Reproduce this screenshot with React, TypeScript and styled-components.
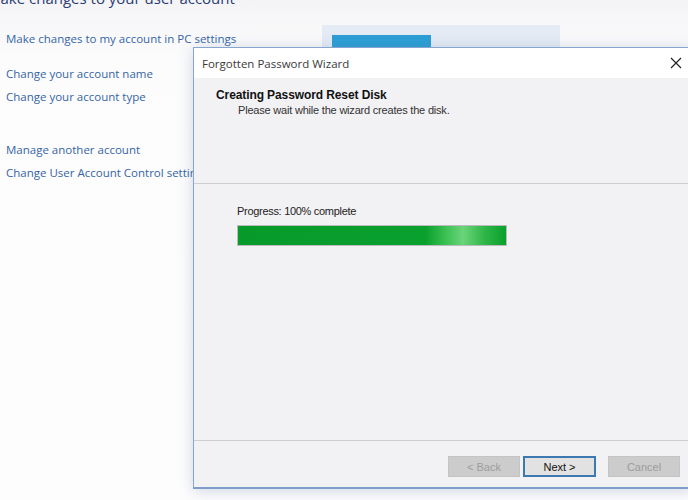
import styled, { createGlobalStyle } from 'styled-components';

const Global = createGlobalStyle`
  html, body {
    margin: 0;
    padding: 0;
    background: #fbfbfc;
  }
`;

const Desktop = styled.div`
  position: relative;
  width: 688px;
  height: 500px;
  overflow: hidden;
  background: linear-gradient(#f4f4f6, #fcfcfd 60px, #fdfdfe);
  font-family: 'Open Sans', 'Noto Sans', sans-serif;
`;

const Page = styled.div`
  display: flex;
  flex-direction: column;
  padding: 0 0 0 6px;
`;

const Heading = styled.h1`
  margin: -12px 0 0 -19px;
  font-size: 15px;
  font-weight: 400;
  color: #2a3c74;
  line-height: 20px;
  white-space: nowrap;
`;

const TopRow = styled.div`
  display: flex;
  align-items: flex-start;
  margin-top: 22px;
`;

const Tile = styled.div`
  margin: -5px 0 0 86px;
  width: 238px;
  height: 22px;
  background: #e4ebf5;
  display: flex;
  align-items: flex-end;
  padding-left: 10px;
  box-sizing: border-box;
`;

const TileBar = styled.div`
  width: 99px;
  height: 12px;
  background: #2c9fd5;
`;

const LinkGroup = styled.div<{ $gap: number }>`
  display: flex;
  flex-direction: column;
  gap: 5px;
  margin-top: ${(p) => p.$gap}px;
`;

const PageLink = styled.a`
  font-size: 11.5px;
  line-height: 18px;
  color: #3565a4;
  text-decoration: none;
  white-space: nowrap;
`;

const Window = styled.div`
  position: absolute;
  left: 193px;
  top: 47px;
  width: 500px;
  height: 442px;
  box-sizing: border-box;
  border: 1px solid #86a5cf;
  border-bottom: 2px solid #7d9ecb;
  background: #f2f1f4;
  box-shadow: 0 2px 14px rgba(90, 110, 150, 0.28);
  display: flex;
  flex-direction: column;
  font-family: 'Liberation Sans', Arial, sans-serif;
`;

const TitleBar = styled.div`
  height: 30px;
  background: #ffffff;
  display: flex;
  align-items: center;
  justify-content: space-between;
  padding: 0 9px 0 8px;
  font-family: 'Open Sans', 'Noto Sans', sans-serif;
  font-size: 11.5px;
  color: #3a3a3a;
`;

const Close = styled.span`
  display: flex;
  width: 14px;
  height: 14px;
`;

const Header = styled.div`
  height: 106px;
  box-sizing: border-box;
  padding: 11px 0 0 22px;
  border-bottom: 1px solid #cfcfd2;
`;

const HeaderTitle = styled.div`
  font-size: 12px;
  font-weight: 700;
  color: #111;
  line-height: 13px;
  letter-spacing: -0.1px;
`;

const HeaderSub = styled.div`
  font-size: 11px;
  color: #333;
  line-height: 13px;
  margin: 2px 0 0 22px;
  letter-spacing: -0.2px;
`;

const Body = styled.div`
  flex: 1;
  padding: 21px 0 0 43px;
  border-bottom: 1px solid #cfcfd2;
`;

const Label = styled.div`
  font-size: 11px;
  color: #222;
  line-height: 13px;
  letter-spacing: -0.3px;
`;

const Bar = styled.div`
  margin-top: 7px;
  width: 270px;
  height: 21px;
  background: #e6e6e6;
  border: 1px solid #bcbcbc;
  box-sizing: border-box;
  overflow: hidden;
`;

const Fill = styled.div`
  height: 100%;
  background: linear-gradient(
    90deg,
    #079a2a 0%,
    #0aa02e 70%,
    #3fc256 78%,
    #6ad47a 84%,
    #2fb648 92%,
    #09a02c 100%
  );
`;

const Footer = styled.div`
  height: 46px;
  display: flex;
  justify-content: flex-end;
  align-items: flex-start;
  padding: 15px 12px 0 0;
  box-sizing: border-box;
  gap: 3px;
`;

const Button = styled.button<{ $primary?: boolean; $space?: number }>`
  width: ${(p) => (p.$primary ? 73 : 72)}px;
  height: 21px;
  margin-left: ${(p) => p.$space ?? 0}px;
  box-sizing: border-box;
  font-family: 'Liberation Sans', Arial, sans-serif;
  font-size: 11px;
  padding: 0;
  border: ${(p) => (p.$primary ? '2px solid #3b79b0' : '1px solid #c4c4c4')};
  background: ${(p) => (p.$primary ? '#e2e2e2' : '#cccccc')};
  color: ${(p) => (p.$primary ? '#111' : '#9c9c9c')};
`;

export default function App() {
  return (
    <>
      <Global />
      <Desktop>
        <Page>
          <Heading>Make changes to your user account</Heading>
          <TopRow>
            <PageLink>Make changes to my account in PC settings</PageLink>
            <Tile>
              <TileBar />
            </Tile>
          </TopRow>
          <LinkGroup $gap={17}>
            <PageLink>Change your account name</PageLink>
            <PageLink>Change your account type</PageLink>
          </LinkGroup>
          <LinkGroup $gap={35}>
            <PageLink>Manage another account</PageLink>
            <PageLink>Change User Account Control settings</PageLink>
          </LinkGroup>
        </Page>

        <Window>
          <TitleBar>
            <span>Forgotten Password Wizard</span>
            <Close>
              <svg width="14" height="14" viewBox="0 0 14 14">
                <path d="M2 2 L12 12 M12 2 L2 12" stroke="#222" strokeWidth="1.2" />
              </svg>
            </Close>
          </TitleBar>
          <Header>
            <HeaderTitle>Creating Password Reset Disk</HeaderTitle>
            <HeaderSub>Please wait while the wizard creates the disk.</HeaderSub>
          </Header>
          <Body>
            <Label>Progress: 100% complete</Label>
            <Bar>
              <Fill style={{ width: '100%' }} />
            </Bar>
          </Body>
          <Footer>
            <Button disabled>&lt; Back</Button>
            <Button $primary>Next &gt;</Button>
            <Button disabled $space={9}>Cancel</Button>
          </Footer>
        </Window>
      </Desktop>
    </>
  );
}
